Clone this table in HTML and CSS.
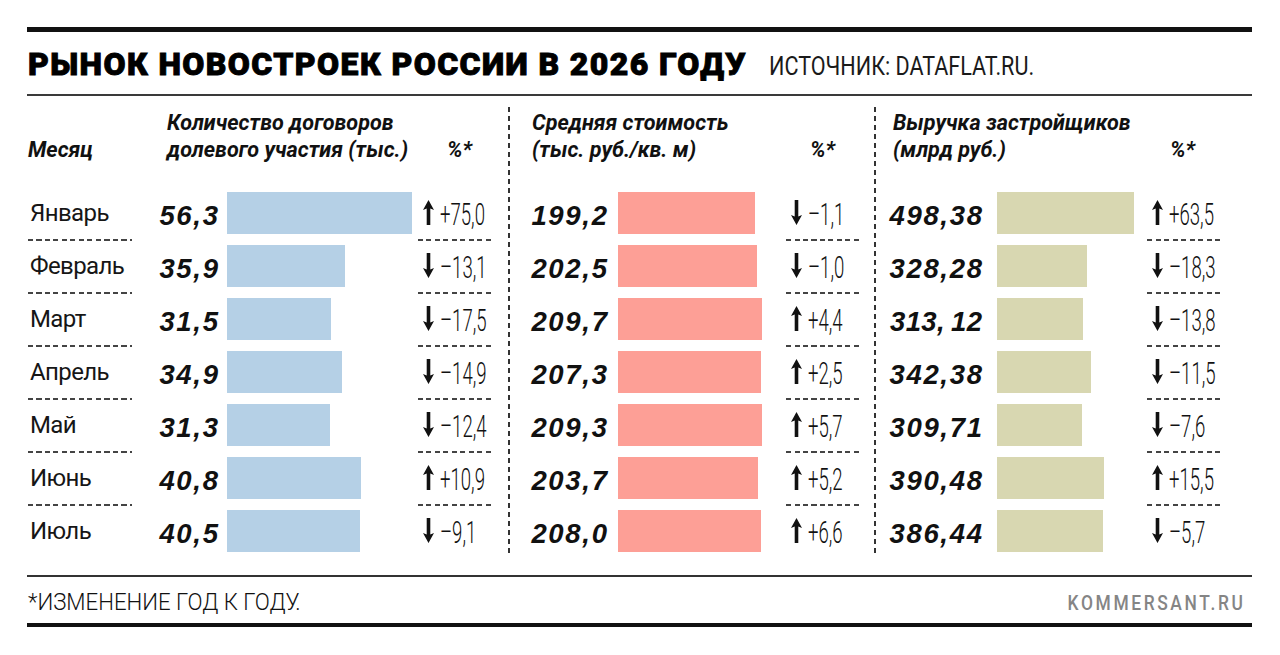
FILE: index.html
```html
<!DOCTYPE html>
<html lang="ru">
<head>
<meta charset="utf-8">
<title>Рынок новостроек России в 2026 году</title>
<link rel="stylesheet" href="styles.css">
</head>
<body>
<svg class="defs" width="0" height="0" aria-hidden="true">
  <symbol id="up" viewBox="0 0 11 25"><path d="M5.5 0 L11 10 L7.3 8.6 L7.3 25 L3.7 25 L3.7 8.6 L0 10 Z"/></symbol>
  <symbol id="down" viewBox="0 0 11 25"><path d="M5.5 25 L11 15 L7.3 16.4 L7.3 0 L3.7 0 L3.7 16.4 L0 15 Z"/></symbol>
</svg>
<div class="wrap">
  <div class="rule-thick"></div>
  <div class="titlebar">
    <h1 class="title">РЫНОК НОВОСТРОЕК РОССИИ В 2026 ГОДУ</h1>
    <span class="source">ИСТОЧНИК: DATAFLAT.RU.</span>
  </div>
  <div class="rule-thin"></div>

  <div class="table">
    <div class="sep sep1"></div>
    <div class="sep sep2"></div>

    <div class="hd one hm">Месяц</div>
    <div class="hd span g1">Количество договоров<br>долевого участия (тыс.)</div>
    <div class="hd one pc1">%*</div>
    <div class="hd span g2">Средняя стоимость<br>(тыс. руб./кв. м)</div>
    <div class="hd one pc2">%*</div>
    <div class="hd span g3">Выручка застройщиков<br>(млрд руб.)</div>
    <div class="hd one pc3">%*</div>

    <!-- Январь -->
    <div class="c m"><div class="in">Январь</div><div class="dash"></div></div>
    <div class="c v v1"><div class="in">56,3</div></div>
    <div class="c b"><div class="bar blue" style="width:185px"></div></div>
    <div class="c p"><div class="in"><svg class="ar"><use href="#up"/></svg><span class="pn">+75,0</span></div><div class="dash"></div></div>
    <div class="c v v2"><div class="in">199,2</div></div>
    <div class="c b"><div class="bar red" style="width:137px"></div></div>
    <div class="c p"><div class="in"><svg class="ar"><use href="#down"/></svg><span class="pn">–1,1</span></div><div class="dash"></div></div>
    <div class="c v v3"><div class="in">498,38</div></div>
    <div class="c b"><div class="bar olive" style="width:137px"></div></div>
    <div class="c p"><div class="in"><svg class="ar"><use href="#up"/></svg><span class="pn">+63,5</span></div><div class="dash"></div></div>

    <!-- Февраль -->
    <div class="c m"><div class="in">Февраль</div><div class="dash"></div></div>
    <div class="c v v1"><div class="in">35,9</div></div>
    <div class="c b"><div class="bar blue" style="width:118px"></div></div>
    <div class="c p"><div class="in"><svg class="ar"><use href="#down"/></svg><span class="pn">–13,1</span></div><div class="dash"></div></div>
    <div class="c v v2"><div class="in">202,5</div></div>
    <div class="c b"><div class="bar red" style="width:139px"></div></div>
    <div class="c p"><div class="in"><svg class="ar"><use href="#down"/></svg><span class="pn">–1,0</span></div><div class="dash"></div></div>
    <div class="c v v3"><div class="in">328,28</div></div>
    <div class="c b"><div class="bar olive" style="width:90px"></div></div>
    <div class="c p"><div class="in"><svg class="ar"><use href="#down"/></svg><span class="pn">–18,3</span></div><div class="dash"></div></div>

    <!-- Март -->
    <div class="c m"><div class="in">Март</div><div class="dash"></div></div>
    <div class="c v v1"><div class="in">31,5</div></div>
    <div class="c b"><div class="bar blue" style="width:104px"></div></div>
    <div class="c p"><div class="in"><svg class="ar"><use href="#down"/></svg><span class="pn">–17,5</span></div><div class="dash"></div></div>
    <div class="c v v2"><div class="in">209,7</div></div>
    <div class="c b"><div class="bar red" style="width:144px"></div></div>
    <div class="c p"><div class="in"><svg class="ar"><use href="#up"/></svg><span class="pn">+4,4</span></div><div class="dash"></div></div>
    <div class="c v v3"><div class="in tight">313,&#8201;12</div></div>
    <div class="c b"><div class="bar olive" style="width:86px"></div></div>
    <div class="c p"><div class="in"><svg class="ar"><use href="#down"/></svg><span class="pn">–13,8</span></div><div class="dash"></div></div>

    <!-- Апрель -->
    <div class="c m"><div class="in">Апрель</div><div class="dash"></div></div>
    <div class="c v v1"><div class="in">34,9</div></div>
    <div class="c b"><div class="bar blue" style="width:115px"></div></div>
    <div class="c p"><div class="in"><svg class="ar"><use href="#down"/></svg><span class="pn">–14,9</span></div><div class="dash"></div></div>
    <div class="c v v2"><div class="in">207,3</div></div>
    <div class="c b"><div class="bar red" style="width:143px"></div></div>
    <div class="c p"><div class="in"><svg class="ar"><use href="#up"/></svg><span class="pn">+2,5</span></div><div class="dash"></div></div>
    <div class="c v v3"><div class="in">342,38</div></div>
    <div class="c b"><div class="bar olive" style="width:94px"></div></div>
    <div class="c p"><div class="in"><svg class="ar"><use href="#down"/></svg><span class="pn">–11,5</span></div><div class="dash"></div></div>

    <!-- Май -->
    <div class="c m"><div class="in">Май</div><div class="dash"></div></div>
    <div class="c v v1"><div class="in">31,3</div></div>
    <div class="c b"><div class="bar blue" style="width:103px"></div></div>
    <div class="c p"><div class="in"><svg class="ar"><use href="#down"/></svg><span class="pn">–12,4</span></div><div class="dash"></div></div>
    <div class="c v v2"><div class="in">209,3</div></div>
    <div class="c b"><div class="bar red" style="width:144px"></div></div>
    <div class="c p"><div class="in"><svg class="ar"><use href="#up"/></svg><span class="pn">+5,7</span></div><div class="dash"></div></div>
    <div class="c v v3"><div class="in">309,71</div></div>
    <div class="c b"><div class="bar olive" style="width:85px"></div></div>
    <div class="c p"><div class="in"><svg class="ar"><use href="#down"/></svg><span class="pn">–7,6</span></div><div class="dash"></div></div>

    <!-- Июнь -->
    <div class="c m"><div class="in">Июнь</div><div class="dash"></div></div>
    <div class="c v v1"><div class="in">40,8</div></div>
    <div class="c b"><div class="bar blue" style="width:134px"></div></div>
    <div class="c p"><div class="in"><svg class="ar"><use href="#up"/></svg><span class="pn">+10,9</span></div><div class="dash"></div></div>
    <div class="c v v2"><div class="in">203,7</div></div>
    <div class="c b"><div class="bar red" style="width:140px"></div></div>
    <div class="c p"><div class="in"><svg class="ar"><use href="#up"/></svg><span class="pn">+5,2</span></div><div class="dash"></div></div>
    <div class="c v v3"><div class="in">390,48</div></div>
    <div class="c b"><div class="bar olive" style="width:107px"></div></div>
    <div class="c p"><div class="in"><svg class="ar"><use href="#up"/></svg><span class="pn">+15,5</span></div><div class="dash"></div></div>

    <!-- Июль -->
    <div class="c m"><div class="in">Июль</div></div>
    <div class="c v v1"><div class="in">40,5</div></div>
    <div class="c b"><div class="bar blue" style="width:133px"></div></div>
    <div class="c p"><div class="in"><svg class="ar"><use href="#down"/></svg><span class="pn">–9,1</span></div></div>
    <div class="c v v2"><div class="in">208,0</div></div>
    <div class="c b"><div class="bar red" style="width:143px"></div></div>
    <div class="c p"><div class="in"><svg class="ar"><use href="#up"/></svg><span class="pn">+6,6</span></div></div>
    <div class="c v v3"><div class="in">386,44</div></div>
    <div class="c b"><div class="bar olive" style="width:106px"></div></div>
    <div class="c p"><div class="in"><svg class="ar"><use href="#down"/></svg><span class="pn">–5,7</span></div></div>
  </div>

  <div class="rule-mid"></div>
  <div class="footer">
    <span class="note">*ИЗМЕНЕНИЕ ГОД К ГОДУ.</span>
    <span class="brand">KOMMERSANT.RU</span>
  </div>
  <div class="rule-bottom"></div>
</div>
</body>
</html>
```

FILE: styles.css
```css
* { box-sizing: border-box; }

body {
  margin: 0;
  background: #fff;
  color: #111;
  font-family: Roboto, "Noto Sans", sans-serif;
}

.defs { display: block; width: 0; height: 0; overflow: hidden; }

.wrap {
  width: 1225px;
  margin-left: 27px;
  padding-top: 27px;
}

.rule-thick { height: 5px; background: #111; }
.rule-thin { height: 2px; background: #3a3a3a; }
.rule-mid { height: 2px; background: #333; margin-top: 12px; }
.rule-bottom { height: 4px; background: #111; }

.titlebar {
  display: flex;
  align-items: baseline;
  gap: 22px;
  height: 62px;
  padding: 16px 0 14px 1px;
}

.title {
  margin: 0;
  font-weight: 900;
  font-size: 32px;
  line-height: 32px;
  letter-spacing: 1.4px;
  white-space: nowrap;
  color: #000;
  -webkit-text-stroke: 0.9px #000;
}

.source {
  display: inline-block;
  font-size: 26px;
  line-height: 32px;
  font-weight: 400;
  white-space: nowrap;
  color: #1a1a1a;
  transform: scaleX(0.83);
  transform-origin: left center;
}

.table {
  display: grid;
  grid-template-columns: 113px 87px 191px 82px 18px 100px 168px 80px 18px 113px 150px 105px;
  grid-template-rows: 96px repeat(7, 53px);
}

.sep {
  grid-row: 1 / -1;
  justify-self: center;
  width: 2px;
  margin: 11px 0 6px;
  background: repeating-linear-gradient(to bottom, #333 0 5px, transparent 5px 9px);
}
.sep1 { grid-column: 5; }
.sep2 { grid-column: 9; }

.hd {
  font-style: italic;
  font-weight: 700;
  font-size: 21.6px;
  line-height: 27px;
  padding-top: 13px;
  white-space: nowrap;
  color: #111;
}
.hd.one { padding-top: 40px; }
.hd.span { grid-column: span 2; }
.hm { padding-left: 1px; }
.g1 { padding-left: 27px; }
.g2 { padding-left: 14px; }
.g3 { padding-left: 9px; }
.pc1 { padding-left: 29px; }
.pc2 { padding-left: 24px; }
.pc3 { padding-left: 23px; }

.in {
  height: 42px;
  display: flex;
  align-items: center;
  white-space: nowrap;
}

.dash {
  height: 2px;
  margin-top: 5px;
  background: repeating-linear-gradient(to right, #444 0 5px, transparent 5px 8.5px);
}

.m .in {
  padding-left: 3px;
  font-size: 24px;
  font-weight: 400;
  letter-spacing: -0.6px;
  color: #161616;
}
.m .dash { width: 104px; margin-left: 1px; }
.p .dash { width: 76px; }

.v .in {
  justify-content: flex-end;
  padding-top: 6px;
  font-family: "Liberation Sans", Arial, sans-serif;
  font-weight: 700;
  font-style: italic;
  font-size: 27.5px;
  letter-spacing: 1.7px;
  color: #111;
}
.v .in.tight { letter-spacing: 0.4px; }
.v1 .in { padding-right: 7.3px; }
.v2 .in { padding-right: 9.3px; }
.v3 .in { padding-right: 13.3px; }
.v3 .in.tight { padding-right: 14.6px; }

.bar { height: 42px; }
.blue { background: #b5d0e6; }
.red { background: #fd9f96; }
.olive { background: #d8d7b1; }

.p .in {
  padding-left: 5px;
  padding-top: 3px;
  gap: 6px;
}

.ar {
  flex: none;
  width: 11px;
  height: 25px;
  align-self: flex-start;
  margin-top: 5px;
  fill: #111;
}

.pn {
  display: inline-block;
  font-weight: 300;
  font-size: 31.5px;
  color: #111;
  transform: scaleX(0.59);
  transform-origin: left center;
}

.footer {
  display: flex;
  justify-content: space-between;
  align-items: baseline;
  height: 46px;
  padding-top: 6px;
  line-height: 40px;
}

.note {
  display: inline-block;
  padding-left: 1px;
  font-size: 23px;
  font-weight: 300;
  color: #111;
  white-space: nowrap;
  transform: scaleX(0.965);
  transform-origin: left center;
}

.brand {
  display: inline-block;
  padding-right: 8px;
  font-size: 20px;
  font-weight: 500;
  letter-spacing: 3px;
  color: #858585;
  white-space: nowrap;
  transform: scaleX(0.87);
  transform-origin: right center;
}
```
